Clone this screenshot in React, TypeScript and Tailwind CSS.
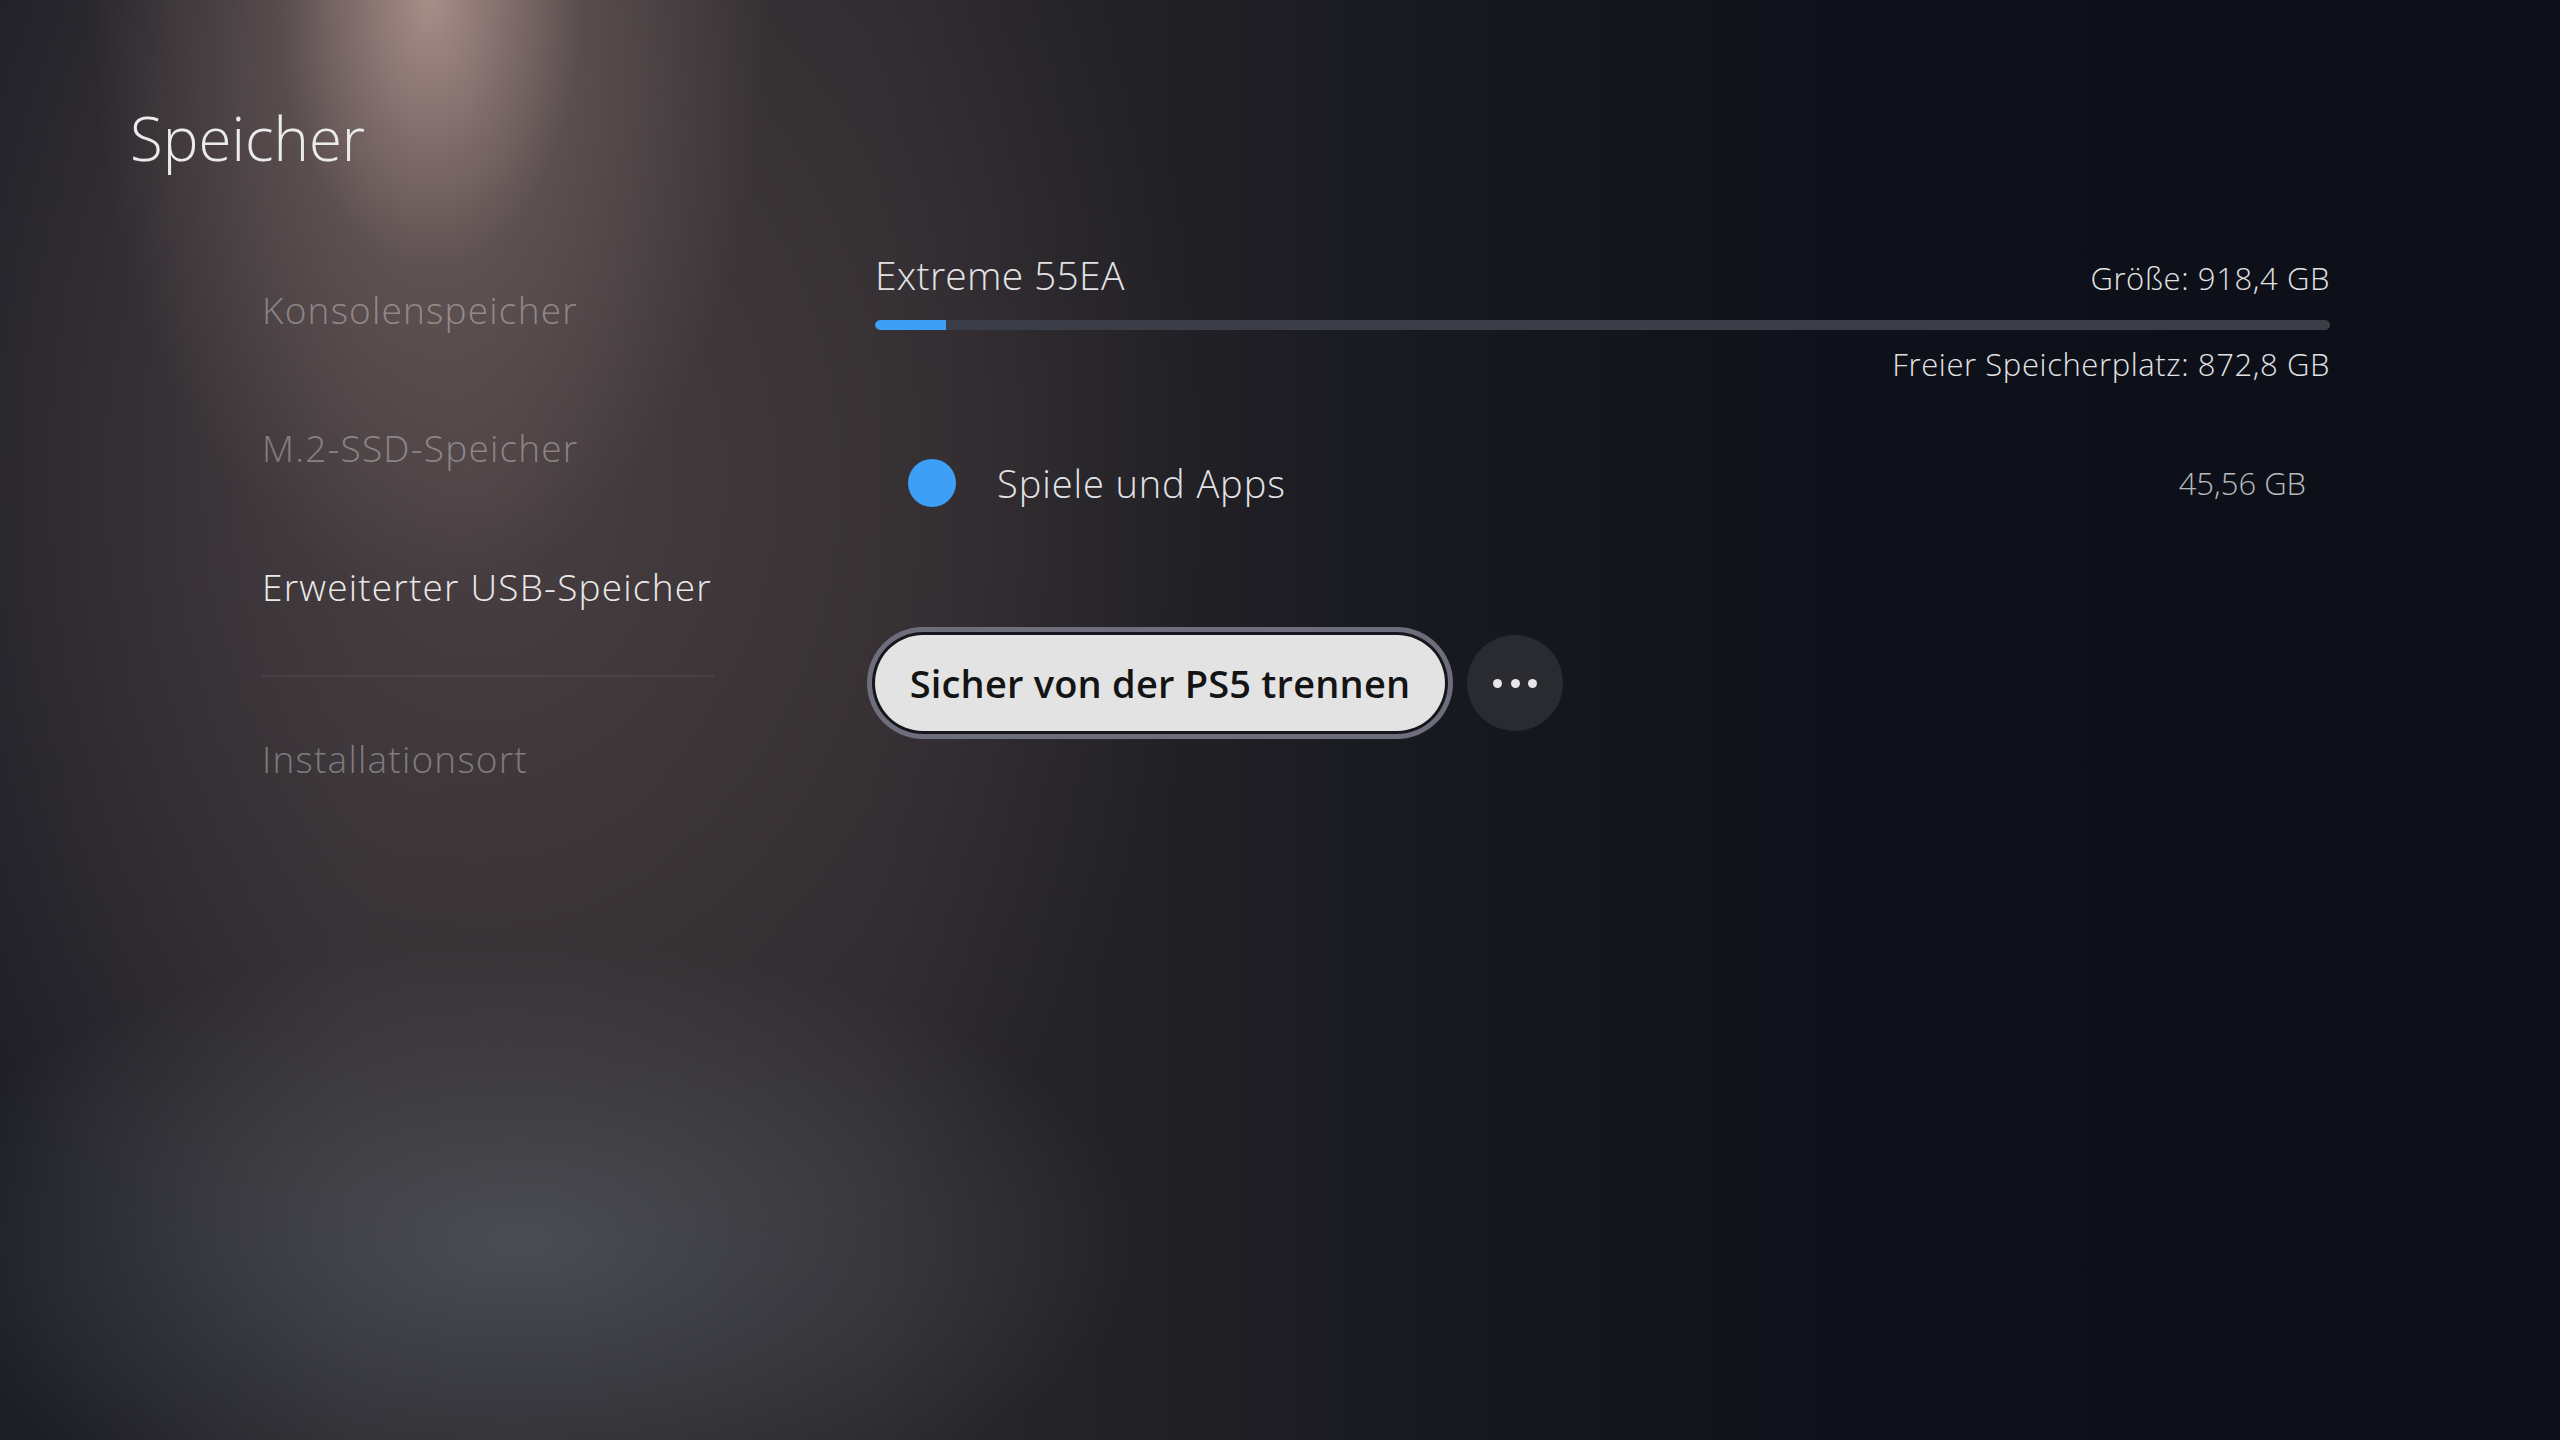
import React from 'react';

const navItems = [
  { label: 'Konsolenspeicher', active: false },
  { label: 'M.2-SSD-Speicher', active: false },
  { label: 'Erweiterter USB-Speicher', active: true },
];

const NavItem: React.FC<{ label: string; active: boolean; className?: string }> = ({
  label,
  active,
  className = '',
}) => (
  <div
    className={`text-[37px] leading-none font-light tracking-[1.2px] whitespace-nowrap ${
      active ? 'text-[#e9e9ea]' : 'text-white/35'
    } ${className}`}
  >
    {label}
  </div>
);

export default function App() {
  return (
    <div className="w-[2560px] h-[1440px] overflow-hidden font-['Open_Sans',sans-serif] [background:radial-gradient(ellipse_340px_600px_at_430px_0px,rgba(195,165,157,0.8),rgba(150,125,120,0.35)_45%,transparent_100%),radial-gradient(ellipse_740px_900px_at_480px_480px,rgba(85,72,74,0.7),transparent_100%),radial-gradient(ellipse_620px_300px_at_520px_1240px,rgba(80,86,94,0.8),transparent_100%),linear-gradient(90deg,#1c1d25_0%,#2b292e_14%,#2b282c_34%,#16181f_58%,#0e111a_74%,#0c0f18_100%)]">
      <div className="pl-[130px] pt-[108px]">
        <h1 className="text-[60px] leading-none font-light text-[#ebebeb]">Speicher</h1>

        <div className="flex items-start">
          {/* left navigation */}
          <nav className="ml-[132px] w-[452px] pt-[123px] flex flex-col">
            <NavItem {...navItems[0]} />
            <NavItem {...navItems[1]} className="mt-[101px]" />
            <NavItem {...navItems[2]} className="mt-[102px]" />
            <div className="mt-[70px] h-[2px] bg-white/[0.06]" />
            <NavItem label="Installationsort" active={false} className="mt-[63px]" />
          </nav>

          {/* storage details */}
          <main className="ml-[161px] w-[1455px] pt-[87px] text-[#e2e2e4]">
            <div className="flex items-baseline justify-between">
              <span className="text-[39px] leading-none font-light tracking-[0.3px]">Extreme 55EA</span>
              <span className="text-[31px] leading-none font-light tracking-[0.6px]">Größe: 918,4 GB</span>
            </div>

            <div className="mt-[26px] h-[10px] rounded-full bg-[#3b3e46] overflow-hidden">
              <div className="h-full w-[71px] rounded-l-full bg-[#3d9ff5]" />
            </div>

            <div className="mt-[19px] text-right text-[31px] leading-none font-light tracking-[0.6px]">
              Freier Speicherplatz: 872,8 GB
            </div>

            <div className="mt-[79px] flex items-center pr-[24px]">
              <div className="ml-[33px] w-[48px] h-[48px] rounded-full bg-[#3d9ff5]" />
              <span className="ml-[41px] text-[38px] leading-none font-light tracking-[0.9px]">
                Spiele und Apps
              </span>
              <span className="ml-auto text-[31px] leading-none font-light text-[#b9b9bd]">
                45,56 GB
              </span>
            </div>

            <div className="mt-[128px] flex items-center">
              <button className="w-[570px] h-[96px] rounded-full bg-[#e3e3e4] text-[#141414] text-[38px] font-semibold leading-none tracking-[0.2px] shadow-[0_0_0_3px_#16171c,0_0_0_8px_#6e6d7c]">
                Sicher von der PS5 trennen
              </button>
              <button className="ml-[22px] w-[96px] h-[96px] rounded-full bg-[#2a2b30] flex items-center justify-center gap-[8.5px]">
                <span className="w-[9px] h-[9px] rounded-full bg-[#e6e6e8]" />
                <span className="w-[9px] h-[9px] rounded-full bg-[#e6e6e8]" />
                <span className="w-[9px] h-[9px] rounded-full bg-[#e6e6e8]" />
              </button>
            </div>
          </main>
        </div>
      </div>
    </div>
  );
}
